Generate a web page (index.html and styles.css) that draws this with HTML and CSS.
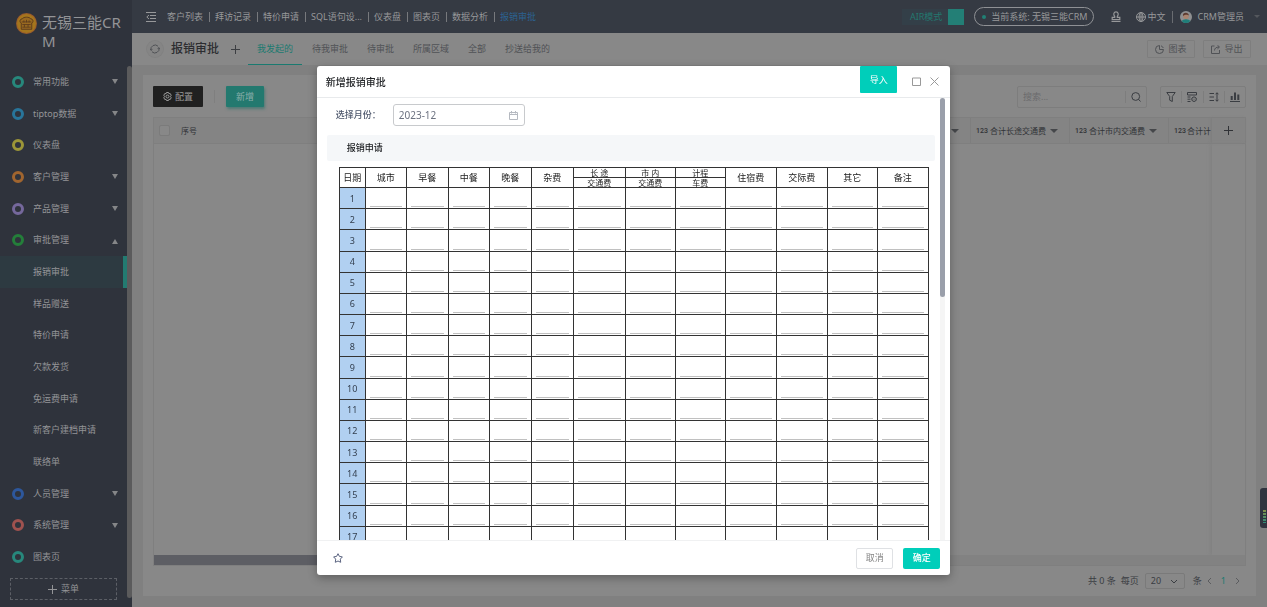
FILE: index.html
```html
<!DOCTYPE html>
<html lang="zh-CN">
<head>
<meta charset="utf-8">
<title>无锡三能CRM</title>
<link rel="stylesheet" href="styles.css">
</head>
<body>
<div class="app">
  <aside class="sidebar">
    <div class="brand">
      <svg class="brand-logo" viewBox="0 0 20 20"><circle cx="10" cy="10" r="10" fill="#9a5c2c"/><circle cx="10" cy="10" r="9" fill="#a5761d"/><path d="M5 9.500C3 9 3.500 5.500 6 5.500 7 3.500 13 3.500 14 5.500 16.500 5.500 17 9 15 9.500V15.500H5z" fill="#9a6a20" stroke="#5a3a1e" stroke-width=".9"/><path d="M5.500 8.500h9M6 11h8M6 13.500h8M7.500 7v2M10 6.500v2.500M12.500 7v2M8 11v2.500M11.500 11v2.500" stroke="#5a3a1e" stroke-width=".8"/></svg>
      <span class="brand-name">无锡三能CRM</span>
    </div>
    <div class="side-body">
      <div class="side-main">
        <nav class="menu">
          <a class="item" href="#"><i class="ring teal"></i><span>常用功能</span><i class="caret"></i></a>
          <a class="item" href="#"><i class="ring sky"></i><span>tiptop数据</span><i class="caret"></i></a>
          <a class="item" href="#"><i class="ring yellow"></i><span>仪表盘</span></a>
          <a class="item" href="#"><i class="ring orange"></i><span>客户管理</span><i class="caret"></i></a>
          <a class="item" href="#"><i class="ring purple"></i><span>产品管理</span><i class="caret"></i></a>
          <a class="item" href="#"><i class="ring green"></i><span>审批管理</span><i class="caret up"></i></a>
          <a class="item sub active" href="#">报销审批</a>
          <a class="item sub" href="#">样品赠送</a>
          <a class="item sub" href="#">特价申请</a>
          <a class="item sub" href="#">欠款发货</a>
          <a class="item sub" href="#">免运费申请</a>
          <a class="item sub" href="#">新客户建档申请</a>
          <a class="item sub" href="#">联络单</a>
          <a class="item" href="#"><i class="ring blue"></i><span>人员管理</span><i class="caret"></i></a>
          <a class="item" href="#"><i class="ring red"></i><span>系统管理</span><i class="caret"></i></a>
          <a class="item" href="#"><i class="ring teal"></i><span>图表页</span></a>
        </nav>
        <button class="add-menu"><svg class="ico9" viewBox="0 0 9 9"><path d="M4.500 0v9M0 4.500h9"/></svg>菜单</button>
      </div>
      <div class="side-scroll"></div>
    </div>
  </aside>

  <div class="main">
    <header class="topbar">
      <svg class="fold" viewBox="0 0 10 10"><path d="M0 .5h10M4 3.500h6M4 6.500h6M0 9.500h10M3 3 .8 5 3 7"/></svg>
      <nav class="links">
        <a href="#">客户列表</a><a href="#">拜访记录</a><a href="#">特价申请</a><a href="#">SQL语句设...</a><a href="#">仪表盘</a><a href="#">图表页</a><a href="#">数据分析</a><a class="current" href="#">报销审批</a>
      </nav>
      <div class="top-right">
        <button class="air"><span>AIR模式</span><i></i></button>
        <button class="system"><i class="dot"></i>当前系统: 无锡三能CRM</button>
        <svg class="stamp" viewBox="0 0 10 11"><path d="M3.700 5.500C2 3.500 2.800.8 5 .8S8 3.500 6.300 5.500v.8h2.500v2.200H1.200V6.300h2.500zM.5 10.300h9" stroke-width="1.200"/></svg>
        <button class="lang"><svg class="ico10" viewBox="0 0 10 10"><circle cx="5" cy="5" r="4.500"/><ellipse cx="5" cy="5" rx="2" ry="4.500"/><path d="M.5 5h9M5 .5v9"/></svg>中文</button>
        <button class="user"><svg class="avatar" viewBox="0 0 12 12"><circle cx="6" cy="6" r="6" fill="#8f9092"/><path d="M1.500 10a5 3 0 0 1 9 0 6 6 0 0 1-9 0z" fill="#1f7e79"/><circle cx="6" cy="5.300" r="2.800" fill="#a98470"/><path d="M3 5C2 1 9 .8 8.800 4.500 8 3.500 5 3 3 5z" fill="#5c3a30"/></svg>CRM管理员<i class="user-caret"></i></button>
      </div>
    </header>

    <div class="tabbar">
      <button class="refresh" aria-label="刷新"><svg class="ico10" viewBox="0 0 10 10"><path d="M1 6.200a4.200 4.200 0 0 1 7-4M9 3.800a4.200 4.200 0 0 1-7 4M.2 4.800 1 6.300l1.400-.8M9.800 5.200 9 3.700l-1.400.8"/></svg></button>
      <h1>报销审批</h1>
      <svg class="ico9 plus" viewBox="0 0 9 9"><path d="M4.500 0v9M0 4.500h9"/></svg>
      <nav class="tabs">
        <a class="on" href="#">我发起的</a><a href="#">待我审批</a><a href="#">待审批</a><a href="#">所属区域</a><a href="#">全部</a><a href="#">抄送给我的</a>
      </nav>
      <div class="tab-actions">
        <button><svg class="ico9" viewBox="0 0 9 9"><path d="M4.500.5a4 4 0 1 0 4 4h-4zM6 .8A4 4 0 0 1 8.300 3"/></svg>图表</button>
        <button><svg class="ico9" viewBox="0 0 9 9"><path d="M3.500 1H.5v7.500h8V5M3.500 5.500c0-2 1.500-3.500 4.500-3.500M6.500.3 8.500 2l-2 1.800"/></svg>导出</button>
      </div>
    </div>

    <section class="card">
      <div class="tools">
        <button class="config"><svg class="ico9" viewBox="0 0 9 9"><circle cx="4.500" cy="4.500" r="1.500"/><path d="m3.500.5h2l.4 1.200 1.300-.2 1 1.800-.8 1.200.8 1.200-1 1.800-1.300-.2-.4 1.200h-2l-.4-1.200-1.300.2-1-1.800.8-1.200-.8-1.200 1-1.800 1.300.2z"/></svg>配置</button>
        <i class="rule"></i>
        <button class="create">新增</button>
        <label class="search"><input type="text" placeholder="搜索..." aria-label="搜索"><svg class="ico10" viewBox="0 0 10 10"><circle cx="4.700" cy="4.500" r="3.900"/><path d="m7.500 7.300 2 2.200"/></svg></label>
        <div class="icon-group">
          <button aria-label="筛选"><svg class="ico10" viewBox="0 0 10 10"><path d="M.8.5h8.400L6.300 4.500v5l-2.600-1.300V4.500z"/></svg></button>
          <button aria-label="列设置"><svg class="ico10" viewBox="0 0 10 10"><path d="M.5.5h9v2.500h-9zM.5 5h3M.5 7.200h3M.5 9.500h3"/><path d="m7 4.800 2.200 1.200v2.400L7 9.600 4.900 8.400V6z"/><path d="M6.700 7.200h.7"/></svg></button>
          <button aria-label="行高"><svg class="ico10" viewBox="0 0 10 10"><path d="M.5 1.500h4.500M.5 5h4.500M.5 8.500h4.500M8 .8v8.400M6.500 2.300 8 .8l1.500 1.500M6.500 7.700 8 9.200l1.500-1.500"/></svg></button>
          <button aria-label="统计"><svg class="ico10" viewBox="0 0 10 10"><path d="M0 9.500h10"/><path d="M1.700 4v4M5 .5V8M8.300 2.500V8" stroke-width="2"/></svg></button>
        </div>
      </div>
      <div class="grid">
        <div class="grid-head">
          <input type="checkbox" aria-label="全选">
          <span class="no">序号</span>
          <div class="cols">
            <span class="col first"><i class="tri"></i></span>
            <span class="col"><b>123</b>合计长途交通费<i class="tri"></i></span>
            <span class="col"><b>123</b>合计市内交通费<i class="tri"></i></span>
            <span class="col last"><b>123</b>合计计</span>
          </div>
          <button class="add-col" aria-label="添加列"><svg class="ico9" viewBox="0 0 9 9"><path d="M4.500 0v9M0 4.500h9"/></svg></button>
        </div>
        <div class="grid-body"><div class="pinned"></div></div>
        <div class="hscroll"><i></i></div>
      </div>
      <footer class="pager">
        <span>共 0 条</span>
        <label for="size">每页</label>
        <div class="select-wrap"><select id="size"><option>20</option></select><svg viewBox="0 0 8 5"><path d="m1 1 3 3 3-3"/></svg></div>
        <span class="unit">条</span>
        <button aria-label="上一页"><svg viewBox="0 0 5 8"><path d="M4 1 1 4l3 3"/></svg></button>
        <span class="page">1</span>
        <button aria-label="下一页"><svg viewBox="0 0 5 8"><path d="m1 1 3 3-3 3"/></svg></button>
      </footer>
    </section>
  </div>
</div>

<div class="meter"><i></i></div>

<div class="overlay">
  <section class="dialog" role="dialog" aria-labelledby="dlg">
    <header class="dlg-head">
      <h2 id="dlg">新增报销审批</h2>
      <button class="import">导入</button>
      <button class="win" aria-label="最大化"><svg class="ico9" viewBox="0 0 9 9"><path d="M.5 1h8v7.500h-8z"/></svg></button>
      <button class="win" aria-label="关闭"><svg class="ico9" viewBox="0 0 9 9"><path d="m.5.5 8 8M8.500.5l-8 8"/></svg></button>
    </header>
    <div class="dlg-body">
      <div class="form">
        <div class="field">
          <label for="month">选择月份：</label>
          <div class="date"><input id="month" type="text" value="2023-12"><svg class="ico9" viewBox="0 0 9 9"><path d="M.5 1.500h8v7h-8zM.5 3.500h8M2.500 0v2.500M6.500 0v2.500"/></svg></div>
        </div>
        <h3>报销申请</h3>
        <table class="sheet">
          <colgroup><col class="w26"><col class="w41"><col class="w42"><col class="w41"><col class="w42"><col class="w42"><col class="w52"><col class="w50"><col class="w50"><col class="w51"><col class="w51"><col class="w50"><col class="w51"></colgroup>
          <thead>
            <tr><th rowspan="2">日期</th><th rowspan="2">城市</th><th rowspan="2">早餐</th><th rowspan="2">中餐</th><th rowspan="2">晚餐</th><th rowspan="2">杂费</th><th class="half">长 途</th><th class="half">市 内</th><th class="half">计程</th><th rowspan="2">住宿费</th><th rowspan="2">交际费</th><th rowspan="2">其它</th><th rowspan="2">备注</th></tr>
            <tr><th class="half">交通费</th><th class="half">交通费</th><th class="half">车费</th></tr>
          </thead>
          <tbody id="days"></tbody>
        </table>
      </div>
      <div class="vscroll"><i></i></div>
    </div>
    <footer class="dlg-foot">
      <button class="star" aria-label="收藏"><svg class="ico10" viewBox="0 0 10 10"><path d="m5 .7 1.400 2.700 3 .5-2.100 2.200.4 3.200L5 8l-2.700 1.300.4-3.200L.6 3.900l3-.5z"/></svg></button>
      <button class="cancel">取消</button>
      <button class="ok">确定</button>
    </footer>
  </section>
</div>
<script src="app.js"></script>
</body>
</html>
```

FILE: styles.css
```css
* { box-sizing: border-box; }
body {
  margin: 0;
  height: 100vh;
  overflow: hidden;
  background: #808080;
  font: 9px/14px "Noto Sans", "Noto Sans CJK SC", sans-serif;
  color: #3a3d42;
}
button, input, select { font: inherit; color: inherit; }
button { margin: 0; padding: 0; border: 0; background: none; display: flex; align-items: center; justify-content: center; }
a { color: inherit; text-decoration: none; }
h1, h2, h3 { margin: 0; }
svg { display: block; flex: none; fill: none; stroke: currentColor; }
.ico9 { width: 9px; height: 9px; }
.ico10 { width: 10px; height: 10px; }

.app { display: flex; height: 100vh; }

/* sidebar */
.sidebar {
  width: 132px;
  flex: none;
  display: flex;
  flex-direction: column;
  background: #2f333c;
  color: #939497;
}
.brand { display: flex; height: 66px; padding: 13px 11px 0 16px; gap: 5px; }
.brand-logo { width: 21px; height: 21px; stroke: none; }
.brand-name { flex: 1; font-size: 15px; line-height: 19px; word-break: break-all; }
.side-body { flex: 1; display: flex; }
.side-main { flex: 1; display: flex; flex-direction: column; }
.side-scroll { width: 5px; margin-bottom: 9px; border-radius: 3px; background: #5b5b5c; }
.menu { flex: 1; display: flex; flex-direction: column; }
.item { flex: 1; display: flex; align-items: center; padding: 0 9px 0 12px; }
.item span { flex: 1; }
.item.sub { padding-left: 33px; }
.active { background: #2d3a41; border-right: 4px solid #237b71; }
.ring { width: 12px; height: 12px; margin-right: 9px; border: 3px solid; border-radius: 50%; }
.teal { border-color: #27887c; }
.sky { border-color: #28759a; }
.yellow { border-color: #9c9638; }
.orange { border-color: #a0652f; }
.purple { border-color: #75689c; }
.green { border-color: #247f3a; }
.blue { border-color: #2d579c; }
.red { border-color: #9f524f; }
.caret { border: 3px solid transparent; border-top: 5px solid #858688; border-bottom: 0; }
.caret.up { border-top: 0; border-bottom: 5px solid #858688; margin-top: 2px; }
.add-menu { height: 22px; margin: 5px 10px 7px; gap: 4px; border: 1px dashed #5c5f66; }

/* top bar */
.main { flex: 1; min-width: 0; display: flex; flex-direction: column; }
.topbar { height: 33px; display: flex; align-items: center; padding: 0 7px 0 14px; background: #353a43; color: #97989a; }
.fold { width: 10px; height: 10px; margin-right: 11px; }
.links { display: flex; flex: 1; }
.links a { padding: 0 6px 0 5px; line-height: 10px; border-left: 1px solid #77797d; white-space: nowrap; }
.links a:first-child { border-left: 0; padding-left: 0; }
.links .current { color: #2c6291; }
.top-right { display: flex; align-items: center; }
.air { height: 16px; margin-right: 10px; color: #24776f; background: #333f48; }
.air span { padding: 0 6px 0 8px; }
.air i { width: 16px; height: 16px; background: #237f76; }
.system { height: 19px; padding: 0 5px 0 7px; border: 1px solid #8f9195; border-radius: 10px; margin-right: 17px; }
.dot { width: 4px; height: 4px; margin-right: 5px; border-radius: 50%; background: #218075; }
.stamp { width: 10px; height: 11px; margin-right: 15px; }
.lang { gap: 2px; padding-right: 6px; border-right: 1px solid #696c71; height: 12px; }
.user { margin-left: 7px; }
.avatar { width: 12px; height: 12px; margin-right: 6px; stroke: none; }
.user-caret { margin-left: 10px; border: 3px solid transparent; border-top-color: #54575d; border-bottom: 0; }

/* tab bar */
.tabbar { height: 32px; display: flex; align-items: center; padding: 0 16px 0 15px; background: #888; color: #505256; }
.refresh { width: 16px; height: 16px; border-radius: 50%; background: #858585; box-shadow: 0 0 0 1px #818181; }
h1 { margin: 0 12px 0 8px; font-size: 12px; line-height: 18px; font-weight: 500; color: #2c2d30; }
.plus { margin-right: 8px; color: #3c3e42; }
.tabs { display: flex; gap: 1px; flex: 1; align-self: stretch; }
.tabs a { padding: 0 9px; line-height: 32px; }
.tabs .on { color: #1a7a70; border-bottom: 1px solid #1a7a70; }
.tab-actions { display: flex; gap: 8px; }
.tab-actions button { width: 48px; height: 18px; gap: 4px; border: 1px solid #7e7e7e; border-radius: 1px; }

/* list card */
.card { flex: 1; display: flex; flex-direction: column; margin: 10px 11px 11px; padding: 11px 10px 0; background: #888; }
.tools { display: flex; align-items: center; height: 21px; margin-bottom: 10px; }
.config { width: 50px; height: 21px; gap: 3px; border-radius: 1px; background: #202020; color: #9a9a9a; }
.rule { width: 1px; height: 13px; margin: 0 11px; background: #7f7f7f; }
.create { width: 38px; height: 21px; border-radius: 1px; background: #23796f; color: #8dafab; box-shadow: 1px 2px 3px #4c7a75; }
.search { display: flex; align-items: center; width: 130px; height: 22px; margin-left: auto; margin-right: 13px; padding: 0 5px; border: 1px solid #7d7d7d; border-radius: 2px; }
.search input { flex: 1; min-width: 0; height: 12px; margin-right: 5px; padding: 0; border: 0; border-right: 1px solid #7d7d7d; outline: 0; background: none; }
.search input::placeholder { color: #6b6b6d; }
.icon-group { display: flex; width: 86px; height: 22px; align-items: center; border: 1px solid #7d7d7d; border-radius: 2px; }
.icon-group button { flex: 1; height: 12px; border-right: 1px solid #7d7d7d; }
.icon-group button:last-child { border-right: 0; }
.grid { flex: 1; display: flex; flex-direction: column; border: 1px solid #7f7f7f; }
.grid-head { display: flex; align-items: center; height: 26px; background: #848484; border-bottom: 1px solid #7f7f7f; font-size: 8px; color: #303236; }
.grid-head input { appearance: none; width: 11px; height: 11px; margin: 0 11px 0 5px; border: 1px solid #7b7b7b; border-radius: 2px; background: #888; }
.cols { display: flex; align-self: stretch; margin-left: auto; }
.col { display: flex; align-items: center; gap: 2px; width: 99px; padding: 0 11px 0 5px; border-left: 1px solid #7e7e7e; white-space: nowrap; }
.col b { font: 500 7px/14px Roboto, sans-serif; }
.col.first { width: 24px; border-left: 0; }
.col.last { width: 44px; padding-right: 0; gap: 1px; }
.tri { margin-left: auto; border: 4px solid transparent; border-top-color: #45474a; border-bottom: 0; }
.add-col { align-self: stretch; width: 33px; box-shadow: -1px 0 2px #7d7d7d; }
.grid-body { flex: 1; display: flex; justify-content: flex-end; }
.pinned { width: 33px; box-shadow: -2px 0 3px #828282; }
.hscroll { height: 10px; background: #828282; }
.hscroll i { display: block; width: 50%; height: 10px; background: #5d5e64; }
.pager { display: flex; align-items: center; justify-content: flex-end; height: 30px; padding-right: 6px; gap: 5px; }
.select-wrap { position: relative; margin-left: 1px; }
.select-wrap select { appearance: none; display: block; width: 40px; height: 16px; padding: 0 5px; border: 1px solid #7a7a7a; border-radius: 2px; background: none; }
.select-wrap svg { position: absolute; right: 7px; top: 6px; width: 8px; height: 5px; }
.pager button svg { width: 5px; height: 8px; color: #5b5c5f; }
.pager .unit { margin-left: 3px; }
.pager .page { margin: 0 4px; color: #1a7a70; }

.meter { position: fixed; right: 0; top: 488px; width: 7px; height: 40px; padding: 22px 0 0 3px; border-radius: 3px 0 0 3px; background: #30343f; }
.meter i { display: block; width: 3px; height: 13px; background: repeating-linear-gradient(transparent 0 2px, #30343f 2px 3px), linear-gradient(#84924a, #2d8b78); }

/* dialog */
.overlay { position: fixed; inset: 0; display: flex; justify-content: center; padding: 66px 0 32px; }
.dialog { width: 50%; display: flex; flex-direction: column; overflow: hidden; border-radius: 3px; background: #fff; box-shadow: 0 3px 10px rgba(0, 0, 0, .3); }
.dlg-head { display: flex; height: 32px; padding: 0 11px 0 9px; border-bottom: 1px solid #e8eaec; }
h2 { flex: 1; font-size: 10px; line-height: 32px; font-weight: 500; color: #222427; }
.import { width: 37px; height: 27px; margin-right: 13px; border-radius: 1px; background: #00ceba; color: #fff; }
.win { width: 10px; margin-left: 1px; color: #999; }
.win + .win { margin-left: 8px; }
.dlg-body { flex: 1; min-height: 0; display: flex; overflow: hidden; }
.form { flex: 1; padding: 6px 5px 0 10px; }
.field { display: flex; align-items: center; gap: 12px; padding-left: 9px; margin-bottom: 9px; color: #4c566b; }
.field label { width: 45px; font-weight: 500; }
.date { display: flex; align-items: center; width: 132px; height: 22px; padding: 0 6px 0 5px; border: 1px solid #c8cacd; border-radius: 3px; color: #b5b9c0; }
.date input { flex: 1; min-width: 0; padding: 0; border: 0; outline: 0; background: none; font-size: 10px; color: #6c7280; }
h3 { height: 26px; padding-left: 20px; border-radius: 2px; background: #f5f7f9; font-size: 9px; line-height: 26px; font-weight: 500; color: #17191c; }
.sheet { width: 589px; height: 381px; margin: 6px 0 0 12px; border-collapse: collapse; table-layout: fixed; color: #222; }
.sheet th, .sheet td { padding: 0; border: 1px solid #333; text-align: center; font-weight: 400; line-height: 9px; }
.sheet thead tr { height: 10px; }
.sheet .half { font-size: 8px; line-height: 8px; }
.sheet tbody th { background: #b1d0f1; line-height: 19px; color: #344050; }
.sheet td { padding: 0 4px; vertical-align: bottom; }
.sheet td input { display: block; width: 100%; height: 14px; margin-bottom: 1px; padding: 0; border: 0; border-bottom: 1px solid #c0c0c0; outline: 0; background: none; text-align: center; }
.w26 { width: 26px; }
.w41 { width: 41px; }
.w42 { width: 42px; }
.w50 { width: 50px; }
.w51 { width: 51px; }
.w52 { width: 52px; }
.vscroll { width: 10px; padding-right: 5px; background: linear-gradient(90deg, #f5f5f5 5px, #fff 5px); }
.vscroll i { display: block; height: 45%; border-radius: 3px; background: #9a9faa; }
.dlg-foot { display: flex; align-items: center; height: 35px; padding: 0 10px 0 16px; gap: 10px; border-top: 1px solid #f0f1f2; }
.star { margin-right: auto; color: #5b6480; }
.cancel, .ok { width: 37px; height: 21px; border-radius: 2px; }
.cancel { border: 1px solid #dfe1e4; color: #858585; }
.ok { background: #00ceba; color: #fff; font-weight: 500; }
```

FILE: app.js
```js
const days = document.getElementById('days');
const fields = ['城市', '早餐', '中餐', '晚餐', '杂费', '长途交通费', '市内交通费', '计程车费', '住宿费', '交际费', '其它', '备注'];
for (let day = 1; day <= 17; day++) {
  const row = days.insertRow();
  const head = document.createElement('th');
  head.textContent = day;
  row.append(head);
  for (const name of fields) {
    const input = document.createElement('input');
    input.type = 'text';
    input.setAttribute('aria-label', day + '日' + name);
    row.insertCell().append(input);
  }
}
```
